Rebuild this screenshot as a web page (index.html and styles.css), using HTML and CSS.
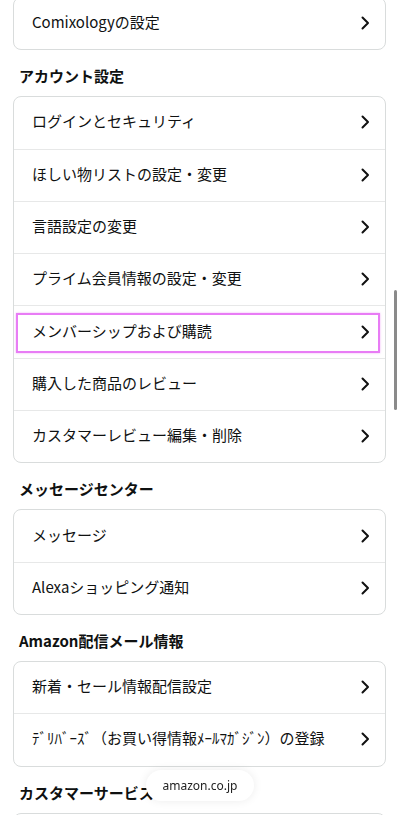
FILE: index.html
```html
<!DOCTYPE html>
<html lang="ja">
<head>
<meta charset="utf-8">
<link rel="stylesheet" href="styles.css">
</head>
<body>
<div class="page">
  <div class="card">
    <div class="row"><span>Comixologyの設定</span><svg class="chev" viewBox="0 0 9 14"><path d="M1.5 1.5 L7 7 L1.5 12.5"/></svg></div>
  </div>

  <h2 class="section">アカウント設定</h2>
  <div class="card">
    <div class="row"><span>ログインとセキュリティ</span><svg class="chev" viewBox="0 0 9 14"><path d="M1.5 1.5 L7 7 L1.5 12.5"/></svg></div>
    <div class="row"><span>ほしい物リストの設定・変更</span><svg class="chev" viewBox="0 0 9 14"><path d="M1.5 1.5 L7 7 L1.5 12.5"/></svg></div>
    <div class="row"><span>言語設定の変更</span><svg class="chev" viewBox="0 0 9 14"><path d="M1.5 1.5 L7 7 L1.5 12.5"/></svg></div>
    <div class="row"><span>プライム会員情報の設定・変更</span><svg class="chev" viewBox="0 0 9 14"><path d="M1.5 1.5 L7 7 L1.5 12.5"/></svg></div>
    <div class="row highlight"><span>メンバーシップおよび購読</span><svg class="chev" viewBox="0 0 9 14"><path d="M1.5 1.5 L7 7 L1.5 12.5"/></svg></div>
    <div class="row"><span>購入した商品のレビュー</span><svg class="chev" viewBox="0 0 9 14"><path d="M1.5 1.5 L7 7 L1.5 12.5"/></svg></div>
    <div class="row"><span>カスタマーレビュー編集・削除</span><svg class="chev" viewBox="0 0 9 14"><path d="M1.5 1.5 L7 7 L1.5 12.5"/></svg></div>
  </div>

  <h2 class="section">メッセージセンター</h2>
  <div class="card">
    <div class="row"><span>メッセージ</span><svg class="chev" viewBox="0 0 9 14"><path d="M1.5 1.5 L7 7 L1.5 12.5"/></svg></div>
    <div class="row"><span>Alexaショッピング通知</span><svg class="chev" viewBox="0 0 9 14"><path d="M1.5 1.5 L7 7 L1.5 12.5"/></svg></div>
  </div>

  <h2 class="section">Amazon配信メール情報</h2>
  <div class="card">
    <div class="row"><span>新着・セール情報配信設定</span><svg class="chev" viewBox="0 0 9 14"><path d="M1.5 1.5 L7 7 L1.5 12.5"/></svg></div>
    <div class="row"><span>ﾃﾞﾘﾊﾞｰｽﾞ（お買い得情報ﾒｰﾙﾏｶﾞｼﾞﾝ）の登録</span><svg class="chev" viewBox="0 0 9 14"><path d="M1.5 1.5 L7 7 L1.5 12.5"/></svg></div>
  </div>

  <h2 class="section">カスタマーサービス</h2>
  <div class="card card-last"></div>
</div>

<div class="scrollbar"></div>
<div class="urlpill">amazon.co.jp</div>
</body>
</html>
```

FILE: styles.css
```css
html, body {
  margin: 0;
  padding: 0;
  background: #ffffff;
  overflow: hidden;
}
body {
  font-family: "Noto Sans CJK JP", "Noto Sans", sans-serif;
  color: #0f1111;
  height: 815px;
}
.page {
  margin-top: -3px;
  padding: 0 14px 0 13px;
}
.card {
  border: 1px solid #d9dcdc;
  border-radius: 8px;
  background: #fff;
}
.card-last {
  height: 52px;
}
.row {
  position: relative;
  height: 51.3px;
  display: flex;
  align-items: center;
  justify-content: space-between;
  padding: 0 15px 0 18px;
  font-size: 15px;
  border-bottom: 1px solid #e7e8e8;
}
.row:last-child {
  border-bottom: none;
}
.row span {
  white-space: nowrap;
  padding-bottom: 4px;
}
.chev {
  width: 9px;
  height: 14px;
  flex: none;
  fill: none;
  stroke: #111;
  stroke-width: 2;
  stroke-linecap: round;
  stroke-linejoin: round;
  margin-bottom: 1px;
}
.highlight::after {
  content: "";
  position: absolute;
  left: 2px;
  right: 5px;
  top: 7px;
  bottom: 5px;
  border: 2px solid #e87cf5;
  box-shadow: 0 0 2px rgba(232, 124, 245, 0.6);
}
.section {
  margin: 0;
  padding: 16px 0 10px 6px;
  font-size: 15px;
  line-height: 20px;
  font-weight: 700;
}
.section span {
  display: block;
}
.scrollbar {
  position: fixed;
  left: 394px;
  top: 290px;
  width: 3px;
  height: 120px;
  border-radius: 2px;
  background: #8a8a8a;
}
.urlpill {
  position: fixed;
  left: 146px;
  top: 770px;
  width: 108px;
  height: 31px;
  border-radius: 16px;
  background: #fff;
  box-shadow: 0 0 10px rgba(0, 0, 0, 0.08);
  display: flex;
  align-items: center;
  justify-content: center;
  font-size: 12px;
  color: #222;
  font-family: "Noto Sans", sans-serif;
}
```
